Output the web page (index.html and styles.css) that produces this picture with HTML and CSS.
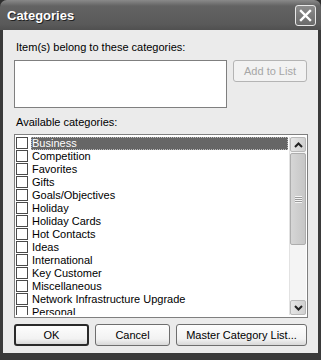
FILE: index.html
```html
<!DOCTYPE html>
<html lang="en">
<head>
    <meta charset="UTF-8">
    <meta name="viewport" content="width=device-width, initial-scale=1.0">
    <title>Categories</title>
    <link rel="stylesheet" href="styles.css">
</head>
<body>
    <div class="window">
        <div class="title-bar">
            <span class="title">Categories</span>
            <span class="close-btn">
                <svg width="13" height="13" viewBox="0 0 13 13">
                    <path d="M2 2 L11 11 M11 2 L2 11" stroke="#fff" stroke-width="2.4" stroke-linecap="square"/>
                </svg>
            </span>
        </div>

        <div class="dialog-body">
            <div class="label">Item(s) belong to these categories:</div>
            <div class="assigned-row">
                <div class="text-box"></div>
                <button class="btn disabled">Add to List</button>
            </div>

            <div class="label available">Available categories:</div>
            <div class="list">
                <div class="list-items">
                    <div class="row"><span class="check"></span><span class="name selected">Business</span></div>
                    <div class="row"><span class="check"></span><span class="name">Competition</span></div>
                    <div class="row"><span class="check"></span><span class="name">Favorites</span></div>
                    <div class="row"><span class="check"></span><span class="name">Gifts</span></div>
                    <div class="row"><span class="check"></span><span class="name">Goals/Objectives</span></div>
                    <div class="row"><span class="check"></span><span class="name">Holiday</span></div>
                    <div class="row"><span class="check"></span><span class="name">Holiday Cards</span></div>
                    <div class="row"><span class="check"></span><span class="name">Hot Contacts</span></div>
                    <div class="row"><span class="check"></span><span class="name">Ideas</span></div>
                    <div class="row"><span class="check"></span><span class="name">International</span></div>
                    <div class="row"><span class="check"></span><span class="name">Key Customer</span></div>
                    <div class="row"><span class="check"></span><span class="name">Miscellaneous</span></div>
                    <div class="row"><span class="check"></span><span class="name">Network Infrastructure Upgrade</span></div>
                    <div class="row"><span class="check"></span><span class="name">Personal</span></div>
                </div>
                <div class="scrollbar">
                    <div class="arrow">
                        <svg width="9" height="6" viewBox="0 0 9 6"><path d="M1 5 L4.5 1.5 L8 5" fill="none" stroke="#222" stroke-width="2"/></svg>
                    </div>
                    <div class="track">
                        <div class="thumb">
                            <span class="grip"></span>
                        </div>
                    </div>
                    <div class="arrow">
                        <svg width="9" height="6" viewBox="0 0 9 6"><path d="M1 1 L4.5 4.5 L8 1" fill="none" stroke="#222" stroke-width="2"/></svg>
                    </div>
                </div>
            </div>

            <div class="actions">
                <button class="btn default">OK</button>
                <button class="btn">Cancel</button>
                <button class="btn wide">Master Category List...</button>
            </div>
        </div>
    </div>
</body>
</html>
```

FILE: styles.css
```css
body {
    margin: 0;
    background: #2e2e2e;
    font-family: "Liberation Sans", Arial, sans-serif;
    font-size: 11px;
    color: #000;
}
.window {
    width: 321px;
    height: 360px;
    background: #3a3a3a;
    border-radius: 7px 7px 0 0;
    display: flex;
    flex-direction: column;
    overflow: hidden;
}
.title-bar {
    height: 30px;
    display: flex;
    align-items: center;
    justify-content: space-between;
    padding: 0 5px 0 7px;
    background: linear-gradient(#8a8a8a, #636363 20%, #5a5a5a 80%, #505050);
    box-sizing: border-box;
}
.title {
    color: #fff;
    font-weight: bold;
    font-size: 13px;
    text-shadow: 1px 1px 0 #222;
    margin-top: 1px;
}
.close-btn {
    width: 21px;
    height: 21px;
    box-sizing: border-box;
    border: 1px solid #e8e8e8;
    border-radius: 3px;
    background: linear-gradient(#8c8c8c, #6a6a6a);
    display: flex;
    align-items: center;
    justify-content: center;
}
.dialog-body {
    margin: 0 3px;
    height: 323px;
    background: #ebebeb;
    padding: 10px 11px 8px 11px;
    box-sizing: border-box;
}
.label {
    line-height: 14px;
    padding-left: 2px;
}
.available {
    margin-top: 7px;
}
.assigned-row {
    display: flex;
    align-items: flex-start;
    gap: 6px;
    margin-top: 6px;
}
.text-box {
    width: 213px;
    height: 48px;
    box-sizing: border-box;
    border: 1px solid #7f7f7f;
    background: #fff;
}
.btn {
    font-family: "Liberation Sans", Arial, sans-serif;
    font-size: 11px;
    height: 22px;
    width: 75px;
    padding: 0;
    box-sizing: border-box;
    border: 1px solid #6e6e6e;
    border-radius: 3px;
    background: linear-gradient(#fdfdfd, #f2f2f2 70%, #d8d8d8);
    color: #000;
}
.btn.disabled {
    width: 74px;
    border-color: #b4b4b4;
    color: #a6a6a6;
    background: #f2f2f2;
}
.btn.default {
    border: 2px solid #2a2a2a;
}
.btn.wide {
    width: 131px;
}
.list {
    margin-top: 5px;
    width: 294px;
    height: 184px;
    box-sizing: border-box;
    border: 1px solid #7f7f7f;
    background: #fff;
    padding: 2px 1px 2px 1px;
    display: flex;
    overflow: hidden;
}
.list-items {
    flex: 1;
    overflow: hidden;
}
.row {
    height: 13px;
    display: flex;
    align-items: flex-start;
    line-height: 13px;
    white-space: nowrap;
}
.check {
    flex: none;
    width: 12px;
    height: 12px;
    box-sizing: border-box;
    border: 1px solid #4a4a4a;
    background: #fff;
    margin-right: 3px;
}
.name {
    padding: 0 1px;
    height: 13px;
    box-sizing: border-box;
}
.name.selected {
    flex: 1;
    margin-right: 1px;
    background: #666;
    color: #fff;
    outline: 1px dotted #bbb;
    outline-offset: -1px;
}
.scrollbar {
    width: 16px;
    display: flex;
    flex-direction: column;
    gap: 1px;
    background: #f4f4f4;
    border-left: 1px solid #e2e2e2;
}
.arrow {
    height: 15px;
    box-sizing: border-box;
    border: 1px solid #b8b8b8;
    border-radius: 2px;
    background: linear-gradient(90deg, #e6e6e6, #d0d0d0);
    display: flex;
    align-items: center;
    justify-content: center;
}
.track {
    flex: 1;
    display: flex;
    flex-direction: column;
}
.thumb {
    height: 92px;
    box-sizing: border-box;
    border: 1px solid #adadad;
    border-radius: 2px;
    background: linear-gradient(90deg, #d6d6d6, #c6c6c6);
    display: flex;
    align-items: center;
    justify-content: center;
}
.grip {
    width: 7px;
    height: 7px;
    background: repeating-linear-gradient(#f4f4f4 0 1px, #9a9a9a 1px 2px);
}
.actions {
    display: flex;
    gap: 6px;
    margin-top: 6px;
}
```
